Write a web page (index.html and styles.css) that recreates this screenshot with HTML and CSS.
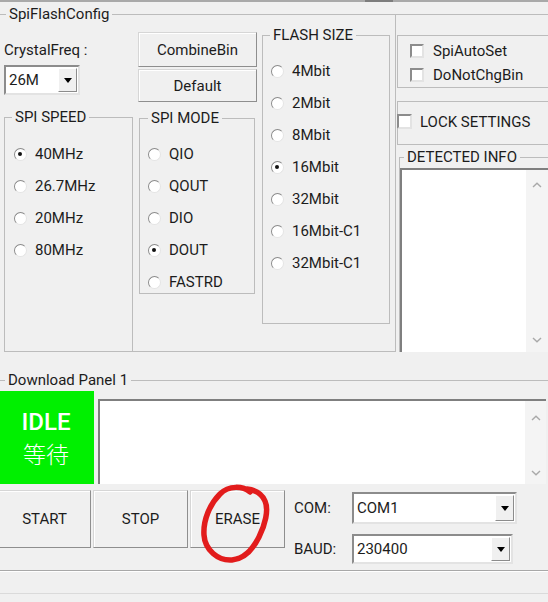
FILE: index.html
```html
<!DOCTYPE html>
<html>
<head>
<meta charset="utf-8">
<link rel="stylesheet" href="styles.css">
</head>
<body>
<div class="topstrip"><span class="topstrip-seg"></span></div>

<section class="group cfg">
  <span class="legend cfg-legend">SpiFlashConfig</span>
  <div class="cfg-cols">
    <div class="col-a">
      <div class="crystal-lbl">CrystalFreq :</div>
      <div class="combo combo-crystal"><span class="combo-val">26M</span><span class="combo-btn"><i class="tri"></i></span></div>
      <div class="group box-speed">
        <span class="legend">SPI SPEED</span>
        <div class="radio"><span class="rb on"></span>40MHz</div>
        <div class="radio"><span class="rb"></span>26.7MHz</div>
        <div class="radio"><span class="rb"></span>20MHz</div>
        <div class="radio"><span class="rb"></span>80MHz</div>
      </div>
    </div>
    <div class="mid">
      <div class="col-b">
        <div class="btn btn-combine">CombineBin</div>
        <div class="btn btn-default">Default</div>
        <div class="group box-mode">
          <span class="legend legend-mode">SPI MODE</span>
          <div class="radio"><span class="rb"></span>QIO</div>
          <div class="radio"><span class="rb"></span>QOUT</div>
          <div class="radio"><span class="rb"></span>DIO</div>
          <div class="radio"><span class="rb on"></span>DOUT</div>
          <div class="radio"><span class="rb"></span>FASTRD</div>
        </div>
      </div>
      <div class="col-c">
        <div class="group box-flash">
          <span class="legend">FLASH SIZE</span>
          <div class="radio"><span class="rb"></span>4Mbit</div>
          <div class="radio"><span class="rb"></span>2Mbit</div>
          <div class="radio"><span class="rb"></span>8Mbit</div>
          <div class="radio"><span class="rb on"></span>16Mbit</div>
          <div class="radio"><span class="rb"></span>32Mbit</div>
          <div class="radio"><span class="rb"></span>16Mbit-C1</div>
          <div class="radio"><span class="rb"></span>32Mbit-C1</div>
        </div>
      </div>
    </div>
    <div class="col-d">
      <div class="group box-opts">
        <div class="check"><span class="cb"></span>SpiAutoSet</div>
        <div class="check"><span class="cb"></span>DoNotChgBin</div>
      </div>
      <div class="group box-lock">
        <span class="cb cb-lock"></span>LOCK SETTINGS
      </div>
      <div class="group box-detect">
        <span class="legend legend-detect">DETECTED INFO</span>
        <div class="textarea ta-detect">
          <div class="scroll">
            <svg class="arr" viewBox="0 0 10 6"><polyline points="1,5 5,1.2 9,5"/></svg>
            <svg class="arr" viewBox="0 0 10 6"><polyline points="1,1 5,4.8 9,1"/></svg>
          </div>
        </div>
      </div>
    </div>
  </div>
</section>

<section class="group dl">
  <span class="legend dl-legend">Download Panel 1</span>
  <div class="dl-row">
    <div class="idle"><span class="idle-en">IDLE</span><span class="idle-zh">等待</span></div>
    <div class="textarea ta-dl">
      <div class="scroll scroll-dl">
        <svg class="arr" viewBox="0 0 10 6"><polyline points="1,5 5,1.2 9,5"/></svg>
        <svg class="arr" viewBox="0 0 10 6"><polyline points="1,1 5,4.8 9,1"/></svg>
      </div>
    </div>
  </div>
  <div class="dl-bottom">
    <div class="btn btn-big btn-start">START</div>
    <div class="btn btn-big btn-stop">STOP</div>
    <div class="btn btn-big btn-erase">ERASE</div>
    <div class="com-panel">
      <span class="com-lbl">COM:</span>
      <div class="combo combo-com"><span class="combo-val">COM1</span><span class="combo-btn"><i class="tri"></i></span></div>
      <span class="com-lbl">BAUD:</span>
      <div class="combo combo-baud"><span class="combo-val">230400</span><span class="combo-btn"><i class="tri"></i></span></div>
    </div>
  </div>
</section>

<div class="footer"></div>

<svg class="annot" viewBox="0 0 78 82">
  <path d="M52 9 C45 3 31 2 22 11 C12 21 5 37 6 52 C7 67 20 78 34 77 C46 76 55 66 61 54 C67 42 71 27 67 18 C64 11 58 7 49 6" />
</svg>
</body>
</html>
```

FILE: styles.css
```css
* { box-sizing: border-box; }
html, body { margin: 0; padding: 0; }
body {
  width: 548px;
  height: 602px;
  overflow: hidden;
  position: relative;
  background: #f0f0f0;
  font-family: Roboto, "Liberation Sans", "Noto Sans CJK SC", sans-serif;
  font-size: 15px;
  color: #1c1c1c;
}

.topstrip { height: 2px; background: #a9a9a9; display: flex; }
.topstrip-seg { margin-left: 365px; width: 28px; background: #7d7d7d; }

.group { position: relative; border: 1px solid #bcbcbc; }
.legend {
  position: absolute;
  top: -10px;
  left: 7px;
  padding: 0 3px;
  background: #f0f0f0;
  line-height: 18px;
  white-space: nowrap;
}

/* config group */
.cfg { margin: 12px 0 0 -2px; width: 552px; border-bottom: none; }
.cfg-legend { left: 7px; }
.cfg-cols { display: flex; align-items: flex-start; }

.col-a { margin-left: 5px; width: 129px; flex: none; }
.crystal-lbl { margin-top: 26px; line-height: 18px; white-space: nowrap; }

.combo {
  display: flex;
  background: #fff;
  border: 2px solid;
  border-color: #8c8c8c #e3e3e3 #e3e3e3 #8c8c8c;
}
.combo-val { flex: 1; padding-left: 3px; display: flex; align-items: center; }
.combo-btn {
  width: 19px;
  margin: 1px;
  background: #f0f0f0;
  border: 1px solid;
  border-color: #ffffff #8c8c8c #8c8c8c #ffffff;
  display: flex;
  align-items: center;
  justify-content: center;
}
.tri {
  width: 0; height: 0;
  border-left: 4px solid transparent;
  border-right: 4px solid transparent;
  border-top: 5px solid #000;
}
.combo-crystal { margin-top: 6px; width: 76px; height: 30px; }

.box-speed { margin-top: 22px; height: 235px; padding: 20px 0 0 9px; }

.radio { display: flex; align-items: center; gap: 8px; height: 32px; white-space: nowrap; }
.rb {
  position: relative;
  flex: none;
  width: 13px; height: 13px;
  border-radius: 50%;
  background: #fff;
  border: 1.5px solid;
  border-color: #8a8a8a #e4e4e4 #e4e4e4 #8a8a8a;
}
.rb.on::after {
  content: "";
  position: absolute;
  left: 3px; top: 3px;
  width: 4px; height: 4px;
  border-radius: 50%;
  background: #111;
}

.mid {
  display: flex;
  align-items: flex-start;
  flex: none;
  width: 263px;
  height: 337px;
  padding: 0 5px;
  border-right: 1px solid #bcbcbc;
  border-bottom: 1px solid #bcbcbc;
}
.col-b { width: 119px; flex: none; }
.btn {
  display: flex;
  align-items: center;
  justify-content: center;
  background: #f0f0f0;
  border: 1px solid;
  border-color: #d6d6d6 #8e8e8e #8e8e8e #d6d6d6;
  box-shadow: inset 1px 1px 0 #ffffff;
  white-space: nowrap;
}
.btn-combine { margin-top: 17px; height: 35px; }
.btn-default { margin-top: 2px; height: 33px; }
.box-mode { margin: 16px 0 0 1px; width: 116px; height: 176px; padding: 19px 0 0 8px; }
.legend-mode { left: 8px; }

.col-c { margin-left: 5px; width: 128px; flex: none; }
.box-flash { margin-top: 20px; height: 289px; padding: 19px 0 0 8px; }

.col-d { width: 154px; flex: none; }
.box-opts { margin: 20px 0 0 1px; height: 53px; padding: 3px 0 0 12px; border-right: none; }
.check { display: flex; align-items: center; gap: 9px; height: 24px; white-space: nowrap; }
.cb {
  flex: none;
  width: 14px; height: 14px;
  background: #fff;
  border: 2px solid;
  border-color: #8c8c8c #e3e3e3 #e3e3e3 #8c8c8c;
}
.box-lock {
  margin: 13px 0 0 1px;
  height: 44px;
  display: flex;
  align-items: center;
  gap: 8px;
  padding-bottom: 3px;
  border-right: none;
  white-space: nowrap;
}
.cb-lock { width: 15px; height: 15px; margin-left: -1px; }
.box-detect { margin: 12px 0 0 3px; height: 195px; padding-top: 10px; border-right: none; border-bottom: none; }
.legend-detect { left: 4px; }

.textarea {
  display: flex;
  background: #fff;
  border-top: 2px solid #7f7f7f;
  border-left: 2px solid #7f7f7f;
}
.ta-detect { width: 148px; height: 184px; }
.scroll {
  margin-left: auto;
  width: 22px;
  background: #f4f4f4;
  display: flex;
  flex-direction: column;
  justify-content: space-between;
  align-items: center;
  padding: 12px 0 9px;
}
.arr { width: 10px; height: 6px; }
.arr polyline { fill: none; stroke: #a9a9a9; stroke-width: 1.4; }

/* download panel */
.dl { margin: 28px 0 0 -2px; width: 552px; border-bottom: none; border-left: none; }
.dl-legend { left: 7px; }
.dl-row { display: flex; margin-top: 10px; }
.idle {
  margin-left: 0;
  width: 96px;
  height: 93px;
  background: #00f000;
  color: #fff;
  display: flex;
  flex-direction: column;
  align-items: center;
  justify-content: center;
}
.idle-en { font-size: 24px; font-weight: 500; line-height: 30px; }
.idle-zh { font-family: "Noto Sans CJK SC", sans-serif; font-size: 23px; font-weight: 300; line-height: 32px; }
.ta-dl { margin: 8px 0 0 4px; width: 448px; height: 85px; }
.scroll-dl { width: 21px; padding: 14px 0 8px; }

.dl-bottom { display: flex; align-items: flex-start; margin-top: 6px; }
.btn-big { height: 58px; flex: none; }
.btn-start { margin-left: 0; width: 93px; }
.btn-stop { margin-left: 2px; width: 95px; }
.btn-erase { margin-left: 2px; width: 95px; }
.com-panel {
  margin-left: 9px;
  padding-top: 2px;
  display: grid;
  grid-template-columns: 58px auto;
  row-gap: 10px;
  align-items: center;
}
.com-lbl { white-space: nowrap; }
.combo-com { width: 165px; height: 32px; }
.combo-baud { width: 161px; height: 30px; }

.footer {
  margin-top: 6px;
  height: 24px;
  border-top: 1px solid #a8a8a8;
  border-bottom: 1px solid #dadada;
  box-shadow: inset 0 1px 0 #ffffff;
}

.annot {
  position: absolute;
  left: 198px;
  top: 483px;
  width: 78px;
  height: 82px;
}
.annot path { fill: none; stroke: #e21c1c; stroke-width: 5.5; stroke-linecap: round; }
```
